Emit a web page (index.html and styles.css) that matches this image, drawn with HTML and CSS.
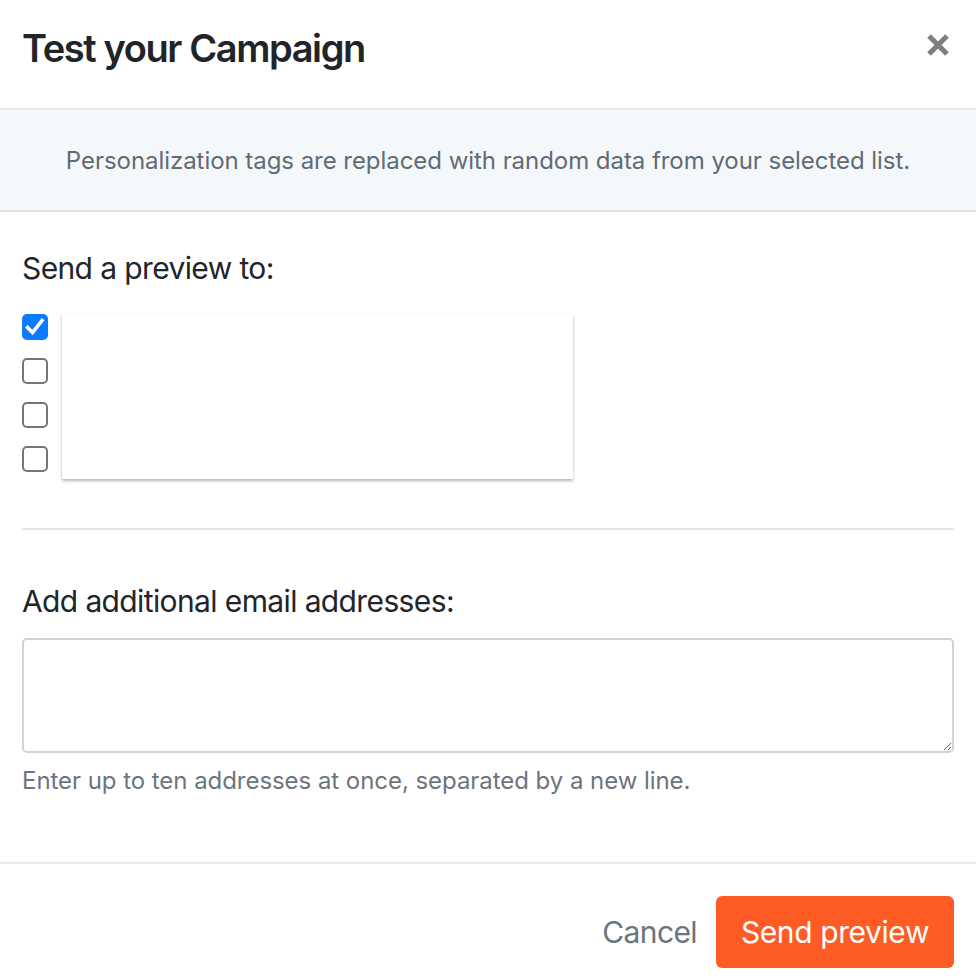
FILE: index.html
```html
<!DOCTYPE html>
<html lang="en">
<head>
<meta charset="utf-8">
<title>Test your Campaign</title>
<link rel="stylesheet" href="styles.css">
</head>
<body>
<div class="modal">
  <header class="modal-header">
    <h1 class="modal-title">Test your Campaign</h1>
    <button class="close" type="button" aria-label="Close">
      <svg width="24" height="24" viewBox="0 0 24 24"><path d="M3 3 L21 21 M21 3 L3 21" stroke="#7f7f7f" stroke-width="5.2" stroke-linecap="butt" fill="none"/></svg>
    </button>
  </header>
  <div class="info">Personalization tags are replaced with random data from your selected list.</div>
  <section class="modal-body">
    <h2 class="label">Send a preview to:</h2>
    <div class="recipients">
      <div class="checks">
        <span class="cb checked"><svg width="26" height="26" viewBox="0 0 26 26"><path d="M5.5 13.5 L10.5 18.5 L20 6.5" stroke="#fff" stroke-width="3.6" fill="none" stroke-linecap="square" stroke-linejoin="miter"/></svg></span>
        <span class="cb"></span>
        <span class="cb"></span>
        <span class="cb"></span>
      </div>
      <div class="list-card"></div>
    </div>
    <hr class="divider">
    <h2 class="label label-add">Add additional email addresses:</h2>
    <textarea class="emails"></textarea>
    <p class="help">Enter up to ten addresses at once, separated by a new line.</p>
  </section>
  <footer class="modal-footer">
    <button class="btn-cancel" type="button">Cancel</button>
    <button class="btn-send" type="button">Send preview</button>
  </footer>
</div>
</body>
</html>
```
FILE: styles.css
```css
html, body {
  margin: 0;
  padding: 0;
  background: #ffffff;
}
body {
  font-family: Inter, "Liberation Sans", Arial, sans-serif;
  color: #212529;
  width: 976px;
}
.modal {
  width: 976px;
}
.modal-header {
  display: flex;
  justify-content: space-between;
  align-items: flex-start;
  height: 110px;
  box-sizing: border-box;
  padding: 24px 26px 0 22px;
  border-bottom: 2px solid #e9ecef;
}
.modal-title {
  margin: 0;
  font-size: 38px;
  line-height: 48px;
  font-weight: 600;
  letter-spacing: -1.4px;
  color: #212529;
}
.close {
  margin-top: 9px;
  padding: 0;
  border: 0;
  background: none;
  width: 24px;
  height: 24px;
  display: block;
}
.close svg { display: block; }
.info {
  height: 100px;
  display: flex;
  align-items: center;
  justify-content: center;
  background: #f5f8fa;
  border-bottom: 2px solid #dee2e6;
  font-size: 24px;
  color: #5f6b75;
  letter-spacing: -0.05px;
}
.modal-body {
  padding: 38px 22px 0 22px;
}
.label {
  margin: 0;
  font-size: 30px;
  line-height: 36px;
  font-weight: 400;
  letter-spacing: -0.62px;
  color: #212529;
}
.recipients {
  display: flex;
  align-items: flex-start;
  margin-top: 28px;
}
.checks {
  display: flex;
  flex-direction: column;
  gap: 18px;
}
.cb {
  display: block;
  width: 26px;
  height: 26px;
  box-sizing: border-box;
  border: 2px solid #767676;
  border-radius: 5px;
  background: #fff;
}
.cb.checked {
  border: 0;
  background: #0b7bff;
}
.cb svg { display: block; }
.list-card {
  margin-left: 14px;
  width: 511px;
  height: 165px;
  background: #fff;
  box-shadow: 0 2px 3px rgba(0, 0, 0, 0.28), 0 0 2px rgba(0, 0, 0, 0.06);
}
.divider {
  margin: 49px 0 0 0;
  border: 0;
  height: 2px;
  background: #e5e5e5;
}
.label-add {
  margin-top: 53px;
}
.emails {
  display: block;
  box-sizing: border-box;
  margin-top: 19px;
  width: 932px;
  height: 115px;
  border: 2px solid #ced4da;
  border-radius: 5px;
  resize: vertical;
  font-family: inherit;
  font-size: 22px;
  outline: none;
}
.help {
  margin: 14px 0 0 0;
  font-size: 24px;
  line-height: 28px;
  color: #6c757d;
  letter-spacing: -0.05px;
}
.modal-footer {
  margin-top: 67px;
  border-top: 2px solid #e9ecef;
  padding: 32px 22px 12px 22px;
  display: flex;
  justify-content: flex-end;
  align-items: center;
}
.btn-cancel {
  border: 0;
  background: none;
  padding: 0;
  margin-right: 19px;
  font-family: inherit;
  font-size: 30px;
  color: #6c757d;
  letter-spacing: -0.6px;
}
.btn-send {
  width: 238px;
  height: 72px;
  border: 0;
  border-radius: 6px;
  background: #ff5b25;
  color: #ffffff;
  font-family: inherit;
  font-size: 30px;
  letter-spacing: -0.4px;
  padding: 0;
}
```
